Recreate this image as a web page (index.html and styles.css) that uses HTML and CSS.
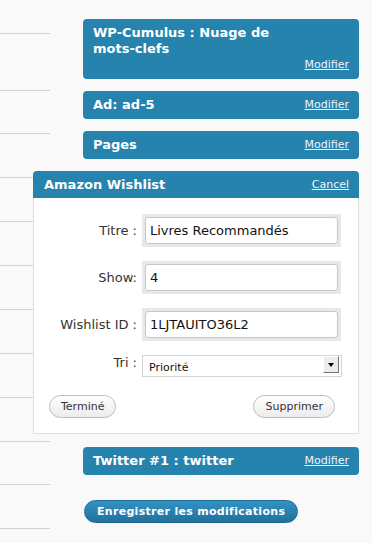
FILE: index.html
```html
<!DOCTYPE html>
<html lang="fr">
<head>
<meta charset="utf-8">
<title>Widgets</title>
<link rel="stylesheet" href="styles.css">
</head>
<body>
<div class="page">
  <div class="rules">
    <div class="rule r1"></div>
    <div class="rule r2"></div>
    <div class="rule r3"></div>
    <div class="rule"></div>
    <div class="rule"></div>
    <div class="rule"></div>
    <div class="rule"></div>
    <div class="rule"></div>
    <div class="rule"></div>
    <div class="rule"></div>
    <div class="rule r3"></div>
    <div class="rule"></div>
  </div>
  <div class="content">
    <div class="widget">
      <div class="widget-head stacked">
        <span class="widget-title">WP-Cumulus : Nuage de mots-clefs</span>
        <a class="widget-link" href="#">Modifier</a>
      </div>
    </div>
    <div class="widget">
      <div class="widget-head">
        <span class="widget-title">Ad: ad-5</span>
        <a class="widget-link" href="#">Modifier</a>
      </div>
    </div>
    <div class="widget">
      <div class="widget-head">
        <span class="widget-title">Pages</span>
        <a class="widget-link" href="#">Modifier</a>
      </div>
    </div>
    <div class="widget open">
      <div class="widget-head">
        <span class="widget-title">Amazon Wishlist</span>
        <a class="widget-link" href="#">Cancel</a>
      </div>
      <div class="widget-body">
        <div class="form">
          <label class="lbl">Titre :</label>
          <div class="field"><input type="text" value="Livres Recommandés"></div>
          <label class="lbl">Show:</label>
          <div class="field"><input type="text" value="4"></div>
          <label class="lbl">Wishlist ID :</label>
          <div class="field"><input type="text" value="1LJTAUITO36L2"></div>
          <label class="lbl top">Tri :</label>
          <div class="select"><span class="select-text">Priorité</span><span class="select-btn"><span class="tri"></span></span></div>
        </div>
        <div class="actions">
          <button class="btn" type="button">Terminé</button>
          <button class="btn" type="button">Supprimer</button>
        </div>
      </div>
    </div>
    <div class="widget twitter">
      <div class="widget-head">
        <span class="widget-title">Twitter #1 : twitter</span>
        <a class="widget-link" href="#">Modifier</a>
      </div>
    </div>
    <button class="save" type="button">Enregistrer les modifications</button>
  </div>
</div>
</body>
</html>
```

FILE: styles.css
```css
* { box-sizing: border-box; }
html, body { margin: 0; padding: 0; }
body {
  background: #f9f9f9;
  font-family: "DejaVu Sans", Verdana, sans-serif;
  color: #333;
  width: 372px;
  height: 543px;
  overflow: hidden;
}
.page { display: grid; }
.rules, .content { grid-area: 1 / 1; }
.rules { width: 50px; }
.rule { height: 44px; border-bottom: 1px solid #d2d2d2; }
.rule.r1 { height: 34px; }
.rule.r2 { height: 57px; }
.rule.r3 { height: 43px; }
.content {
  position: relative;
  z-index: 1;
  padding-top: 19px;
  display: flex;
  flex-direction: column;
  align-items: flex-start;
}
.widget {
  margin-left: 83px;
  width: 276px;
  margin-bottom: 12px;
}
.widget.open { margin-left: 33px; width: 326px; margin-bottom: 13px; }
.widget.twitter { margin-bottom: 25px; }
.widget-head {
  background: #2683ae;
  border-radius: 4px;
  padding: 6px 10px 6px 10px;
  display: flex;
  align-items: center;
  justify-content: space-between;
  line-height: 16px;
}
.widget-head.stacked { flex-direction: column; align-items: stretch; padding-bottom: 6px; }
.widget-head.stacked .widget-title { max-width: 200px; }
.widget-head.stacked .widget-link { align-self: flex-end; line-height: 16px; }
.open .widget-head { border-radius: 4px 4px 0 0; padding: 6px 10px 5px 11px; }
.widget-title { color: #fff; font-weight: bold; font-size: 13px; }
.widget-link { color: #eef5f9; font-size: 11px; text-decoration: underline; }
.widget-body {
  background: #fff;
  border: 1px solid #dfdfdf;
  border-top: none;
  padding: 16px 0 15px 0;
}
.form {
  display: grid;
  grid-template-columns: 103px 200px;
  column-gap: 5px;
  row-gap: 14px;
  align-items: center;
}
.lbl { text-align: right; font-size: 13px; line-height: 16px; color: #333; }
.lbl.top { align-self: start; }
.field { background: #e8e8e8; padding: 3px; width: 199px; border-radius: 1px; }
.field input {
  display: block;
  width: 100%;
  height: 27px;
  border: 1px solid #c8c8c8;
  border-radius: 3px;
  background: #fff;
  font-family: "DejaVu Sans", Verdana, sans-serif;
  font-size: 13px;
  color: #111;
  padding: 0 4px;
  margin: 0;
}
.select {
  width: 200px;
  height: 22px;
  border: 1px solid #d4d4d4;
  background: #fff;
  display: flex;
  align-items: flex-start;
  justify-content: space-between;
}
.select-text { font-size: 11px; color: #111; padding: 5px 0 0 6px; line-height: 14px; }
.select-btn {
  width: 16px;
  height: 17px;
  margin-right: 2px;
  background: #ececec;
  border-top: 1px solid #fff;
  border-left: 1px solid #fff;
  border-right: 1px solid #777;
  border-bottom: 1px solid #777;
  display: flex;
  align-items: center;
  justify-content: center;
}
.tri {
  width: 0; height: 0;
  border-left: 3.5px solid transparent;
  border-right: 3.5px solid transparent;
  border-top: 4px solid #000;
}
.actions {
  display: flex;
  justify-content: space-between;
  margin-top: 18px;
  padding: 0 23px 0 15px;
}
.btn {
  height: 23px;
  border: 1px solid #bdbdbd;
  border-radius: 12px;
  background: linear-gradient(#fefefe, #ececec);
  font-family: "DejaVu Sans", Verdana, sans-serif;
  font-size: 11px;
  color: #333;
  padding: 0 11px;
  margin: 0;
}
.save {
  margin-left: 84px;
  height: 23px;
  border: 1px solid #1f6a93;
  border-radius: 12px;
  background: linear-gradient(#3193c4, #21709b);
  color: #fff;
  font-family: "DejaVu Sans", Verdana, sans-serif;
  font-weight: bold;
  font-size: 11px;
  letter-spacing: 0.3px;
  padding: 0 12px;
}
```
